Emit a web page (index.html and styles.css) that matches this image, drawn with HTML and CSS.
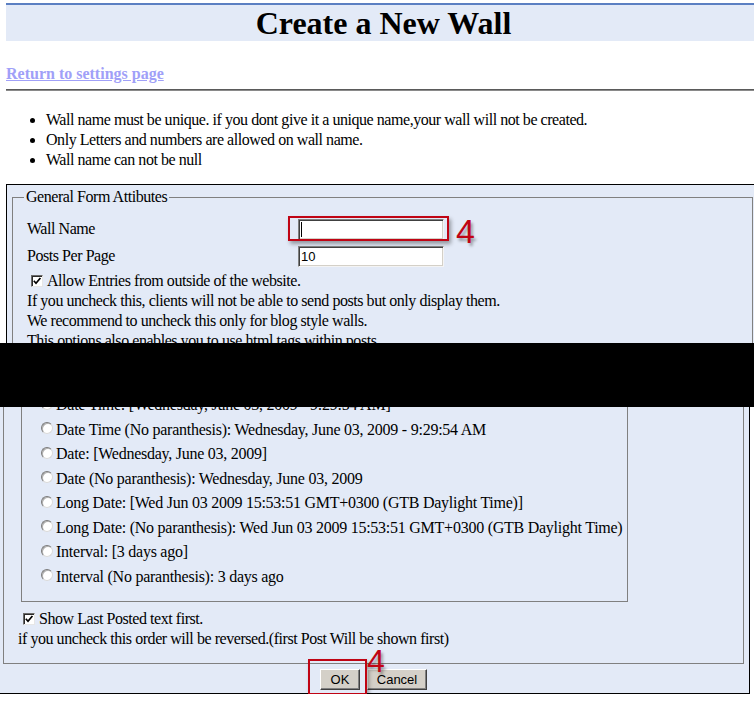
FILE: index.html
```html
<!DOCTYPE html>
<html lang="en">
<head>
<meta charset="utf-8">
<title>Create a New Wall</title>
<link rel="stylesheet" href="styles.css">
</head>
<body>
<div class="page">
  <div class="header"><h1 class="title">Create a New Wall</h1></div>
  <p class="back"><a href="#" class="back-link">Return to settings page</a></p>
  <hr class="rule">
  <ul class="rules">
    <li>Wall name must be unique. if you dont give it a unique name,your wall will not be created.</li>
    <li>Only Letters and numbers are allowed on wall name.</li>
    <li>Wall name can not be null</li>
  </ul>

  <form class="wall-form">
    <div class="shot shot-top">
      <fieldset class="group group-top">
        <legend class="group-legend">General Form Attibutes</legend>
        <div class="fields">
          <label class="field-label" for="wallName">Wall Name</label>
          <div class="field-input">
            <input class="text-input" id="wallName" type="text">
            <span class="caret"></span>
            <span class="callout-box callout-name"></span>
            <span class="callout-num callout-num-name">4</span>
          </div>
          <label class="field-label" for="perPage">Posts Per Page</label>
          <div class="field-input">
            <input class="text-input" id="perPage" type="text" value="10">
          </div>
        </div>
        <div class="check-row check-top">
          <span class="check"><svg viewBox="0 0 10 10" width="10" height="10"><path d="M1.8 4.8 L4 7.2 L8.4 2" fill="none" stroke="#000" stroke-width="1.7"/></svg></span>
          <span>Allow Entries from outside of the website.</span>
        </div>
        <p class="note">If you uncheck this, clients will not be able to send posts but only display them.</p>
        <p class="note">We recommend to uncheck this only for blog style walls.</p>
        <p class="note">This options also enables you to use html tags within posts.</p>
      </fieldset>
    </div>

    <div class="shot shot-bottom">
      <div class="group group-bottom">
        <div class="date-group">
          <div class="radio-row"><span class="radio"></span>Date Time: [Wednesday, June 03, 2009 - 9:29:54 AM]</div>
          <div class="radio-row"><span class="radio"></span>Date Time (No paranthesis): Wednesday, June 03, 2009 - 9:29:54 AM</div>
          <div class="radio-row"><span class="radio"></span>Date: [Wednesday, June 03, 2009]</div>
          <div class="radio-row"><span class="radio"></span>Date (No paranthesis): Wednesday, June 03, 2009</div>
          <div class="radio-row"><span class="radio"></span>Long Date: [Wed Jun 03 2009 15:53:51 GMT+0300 (GTB Daylight Time)]</div>
          <div class="radio-row"><span class="radio"></span>Long Date: (No paranthesis): Wed Jun 03 2009 15:53:51 GMT+0300 (GTB Daylight Time)</div>
          <div class="radio-row"><span class="radio"></span>Interval: [3 days ago]</div>
          <div class="radio-row"><span class="radio"></span>Interval (No paranthesis): 3 days ago</div>
        </div>
        <div class="check-row check-bottom">
          <span class="check"><svg viewBox="0 0 10 10" width="10" height="10"><path d="M1.8 4.8 L4 7.2 L8.4 2" fill="none" stroke="#000" stroke-width="1.7"/></svg></span>
          <span>Show Last Posted text first.</span>
        </div>
        <p class="note">if you uncheck this order will be reversed.(first Post Will be shown first)</p>
      </div>
      <div class="buttons">
        <span class="btn-wrap">
          <button type="button" class="btn btn-ok">OK</button>
          <span class="callout-box callout-ok"></span>
          <span class="callout-num callout-num-ok">4</span>
        </span>
        <button type="button" class="btn btn-cancel">Cancel</button>
      </div>
    </div>
  </form>

  <div class="redaction"></div>
</div>
</body>
</html>
```

FILE: styles.css
```css
html {
  overflow: hidden;
}

body {
  margin: 0;
  background: #fff;
  color: #000;
  font-family: "Liberation Serif", "Times New Roman", serif;
  font-size: 16px;
  line-height: 20px;
  letter-spacing: -0.45px;
}

.page {
  position: relative;
  width: 754px;
  padding-top: 3px;
}

/* Header */
.header {
  margin: 0 0 0 6px;
  width: 755px;
  height: 36px;
  border-top: 2px solid #5b7fc2;
  background: #e3eaf7;
  text-align: center;
}

.title {
  margin: 0;
  font-size: 32px;
  line-height: 36px;
  font-weight: bold;
  letter-spacing: 0;
}

.back {
  margin: 23px 0 0;
  padding-left: 6px;
}

.back-link {
  color: #a0a0f8;
  font-weight: bold;
  letter-spacing: 0;
}

.rule {
  margin: 5px 0 0 6px;
  height: 0;
  border: 0;
  border-top: 1px solid #5a5a5a;
  border-bottom: 1px solid #8a8a8a;
}

.rules {
  margin: 19px 0 0;
  padding-left: 46px;
}

/* Form box */
.wall-form {
  margin-top: 14px;
}

.shot {
  width: 753px;
  box-sizing: border-box;
  background: #e3eaf7;
}

.shot-top {
  margin-left: 6px;
  border-top: 1px solid #000;
  border-left: 1px solid #000;
  padding: 2px 5px 30px;
}

.shot-bottom {
  margin-left: -3px;
  border: 1px solid #000;
  border-top: 0;
  padding: 0 5px 3px;
}

.group {
  box-sizing: border-box;
  width: 741px;
  margin: 0;
  min-width: 0;
}

.group-top {
  border: 1px solid #808080;
  border-bottom: 0;
  padding: 9px 14px 0;
}

.group-legend {
  padding: 0 2px;
  margin-left: -3px;
  line-height: 20px;
}

.group-bottom {
  border: 1px solid #808080;
  border-top: 0;
  padding: 0 14px 14px;
}

.fields {
  display: grid;
  grid-template-columns: 271px 146px;
  grid-auto-rows: 26px;
  row-gap: 1px;
  align-items: center;
}

.field-input {
  position: relative;
  height: 21px;
}

.text-input {
  display: block;
  box-sizing: border-box;
  width: 146px;
  height: 21px;
  margin: 0;
  padding: 0 2px;
  border: 1px solid;
  border-color: #808080 #f4f4f4 #f4f4f4 #808080;
  box-shadow: inset 1px 1px 0 #404040, inset -1px -1px 0 #d4d0c8;
  background: #fff;
  font-family: "Liberation Sans", Arial, sans-serif;
  font-size: 13px;
  letter-spacing: 0;
  color: #000;
  outline: none;
}

.caret {
  position: absolute;
  left: 3px;
  top: 3px;
  width: 1px;
  height: 15px;
  background: #000;
}

/* Red annotation overlays */
.callout-box {
  position: absolute;
  box-sizing: border-box;
  border: 2px solid #c00414;
  box-shadow: 2px 3px 4px rgba(0, 0, 0, 0.35);
  pointer-events: none;
}

.callout-name {
  left: -10px;
  top: -3px;
  width: 161px;
  height: 25px;
}

.callout-num {
  position: absolute;
  color: #c00414;
  font-family: "Liberation Sans", Arial, sans-serif;
  line-height: 1;
  letter-spacing: 0;
  text-shadow: 2px 3px 3px rgba(0, 0, 0, 0.35);
}

.callout-num-name {
  left: 158px;
  top: -5px;
  font-size: 34px;
}

/* Checkboxes */
.check-row {
  display: flex;
  align-items: center;
  height: 20px;
}

.check-top {
  margin-top: 2px;
}

.check {
  flex: none;
  display: flex;
  align-items: center;
  justify-content: center;
  box-sizing: border-box;
  width: 12px;
  height: 12px;
  margin: 0 4px;
  background: #fff;
  border: 1px solid;
  border-color: #6a6a6a #e6e6e6 #e6e6e6 #6a6a6a;
  box-shadow: inset 1px 1px 0 #2a2a2a;
}

.check svg {
  display: block;
}

.check-bottom {
  margin-top: 7px;
}

.check-bottom .check {
  margin-left: 5px;
}

.note {
  margin: 0;
}

/* Date format group */
.date-group {
  box-sizing: border-box;
  width: 607px;
  margin-left: 3px;
  padding: 12px 0 12px 19px;
  border: 1px solid #808080;
  border-top: 0;
}

.radio-row {
  display: flex;
  align-items: center;
  height: 24.5px;
  white-space: nowrap;
  letter-spacing: -0.25px;
}

.radio {
  flex: none;
  box-sizing: border-box;
  width: 12px;
  height: 12px;
  margin: -3px 3px 0 0;
  border-radius: 50%;
  border: 1px solid;
  border-color: #7a7a7a #dadada #dadada #7a7a7a;
  background: #fff;
  box-shadow: inset 1px 1px 0 #b0b0b0;
}

/* Buttons */
.buttons {
  display: flex;
  justify-content: center;
  gap: 7px;
  margin-top: 5px;
}

.btn-wrap {
  position: relative;
  display: block;
}

.btn {
  display: block;
  box-sizing: border-box;
  height: 21px;
  margin: 0;
  padding: 0;
  background: #d4d0c8;
  border: 1px solid;
  border-color: #fff #404040 #404040 #fff;
  box-shadow: inset -1px -1px 0 #808080;
  font-family: "Liberation Sans", Arial, sans-serif;
  font-size: 13px;
  letter-spacing: 0;
  color: #000;
}

.btn-ok {
  width: 40px;
}

.btn-cancel {
  width: 60px;
}

.callout-ok {
  left: -12px;
  top: -10px;
  width: 59px;
  height: 36px;
}

.callout-num-ok {
  left: 47px;
  top: -24px;
  font-size: 32px;
}

/* Redaction bar over the screenshot */
.redaction {
  position: absolute;
  left: 0;
  top: 343px;
  width: 754px;
  height: 64px;
  background: #000;
}
```
